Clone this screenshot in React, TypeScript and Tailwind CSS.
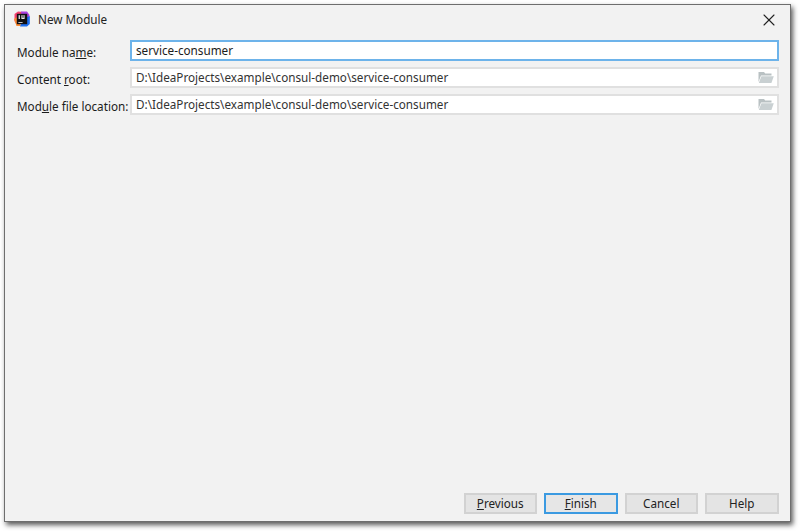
import { X } from "lucide-react";

function IdeaLogo() {
  return (
    <svg width="16" height="16" viewBox="0 0 16 16" className="shrink-0">
      <path d="M0.5 3 L4 0.5 L9 1 L9 9 L3 14 L0.5 10 Z" fill="#f5406f" />
      <path d="M0 8 L4 5.5 L7 15 L2.5 15 Z" fill="#fb8b35" />
      <path d="M7 0.5 L13 0.5 L15.5 4 L15 9 L8 9 Z" fill="#a93fe0" />
      <path d="M15.8 5 L15.8 13 L13 15.5 L6 15.5 L9 8 Z" fill="#1d6ff0" />
      <rect x="2.8" y="2.8" width="10.4" height="10.4" fill="#101014" />
      <rect x="4.6" y="4.2" width="1.3" height="3.8" fill="#e8e8e8" />
      <rect x="7.4" y="4.2" width="3.2" height="3.8" fill="#e8e8e8" />
      <rect x="8.5" y="4.2" width="1" height="2.6" fill="#101014" />
      <rect x="4.4" y="11" width="4.2" height="0.9" fill="#d8d8d8" />
    </svg>
  );
}

function FolderIcon() {
  return (
    <svg width="16" height="13" viewBox="0 0 16 13" className="shrink-0">
      <path d="M0.5 1 H6 L7.2 2.4 H13.5 V4.5 H3 L0.5 11 Z" fill="#b9c1c3" />
      <path d="M3.4 5.2 H15.8 L13.4 12 H0.8 Z" fill="#c9d0d2" />
    </svg>
  );
}

function Field({ label, value, focused }: { label: React.ReactNode; value: string; focused?: boolean }) {
  return (
    <div className="flex items-center">
      <label className="w-[113px] pt-[5px] text-[11.7px] leading-none text-[#1c1c1c] whitespace-nowrap">{label}</label>
      <div
        className={
          focused
            ? "flex items-center w-[648.5px] h-[21px] bg-white border-2 border-[#6db3ea] pl-[4px] text-[11.7px] text-[#1c1c1c]"
            : "flex items-center justify-between w-[648.5px] h-[21px] bg-white border-2 border-[#e0e0e0] pl-[4px] pr-[3px] text-[11.7px] text-[#333]"
        }
      >
        <span>{value}</span>
        {!focused && <FolderIcon />}
      </div>
    </div>
  );
}

function Btn({ children, primary }: { children: React.ReactNode; primary?: boolean }) {
  return (
    <button
      className={
        primary
          ? "w-[73.5px] h-[21px] bg-[#e6e6e6] border-2 border-[#3b9ae1] text-[11.7px] text-[#222] leading-none"
          : "w-[73.5px] h-[21px] bg-[#e4e4e4] border-2 border-[#d2d2d2] text-[11.7px] text-[#222] leading-none"
      }
    >
      {children}
    </button>
  );
}

export default function App() {
  return (
    <div className="w-[800px] h-[531px] bg-white pl-[4px] pt-[4px] font-['Noto_Sans',sans-serif]">
      <div className="flex flex-col w-[787px] h-[518px] bg-[#f2f2f2] border border-[#6e6e6e] shadow-[2px_3px_5px_rgba(0,0,0,0.65)]">
        <div className="flex items-center justify-between h-[29px] pl-[9px] pr-[11.5px] shrink-0">
          <div className="flex items-center gap-[8px]">
            <IdeaLogo />
            <span className="text-[11.7px] text-[#222]">New Module</span>
          </div>
          <X size={20} strokeWidth={1.3} color="#222" />
        </div>
        <div className="flex flex-col gap-[6px] pl-[12px] pt-[6px] flex-1">
          <Field
            focused
            value="service-consumer"
            label={<>Module na<span className="underline">m</span>e:</>}
          />
          <Field
            value="D:\IdeaProjects\example\consul-demo\service-consumer"
            label={<>Content <span className="underline">r</span>oot:</>}
          />
          <Field
            value="D:\IdeaProjects\example\consul-demo\service-consumer"
            label={<>Mod<span className="underline">u</span>le file location:</>}
          />
        </div>
        <div className="flex justify-end gap-[7px] pr-[11.5px] pb-[7px] shrink-0">
          <Btn><span className="underline">P</span>revious</Btn>
          <Btn primary><span className="underline">F</span>inish</Btn>
          <Btn>Cancel</Btn>
          <Btn>Help</Btn>
        </div>
      </div>
    </div>
  );
}
